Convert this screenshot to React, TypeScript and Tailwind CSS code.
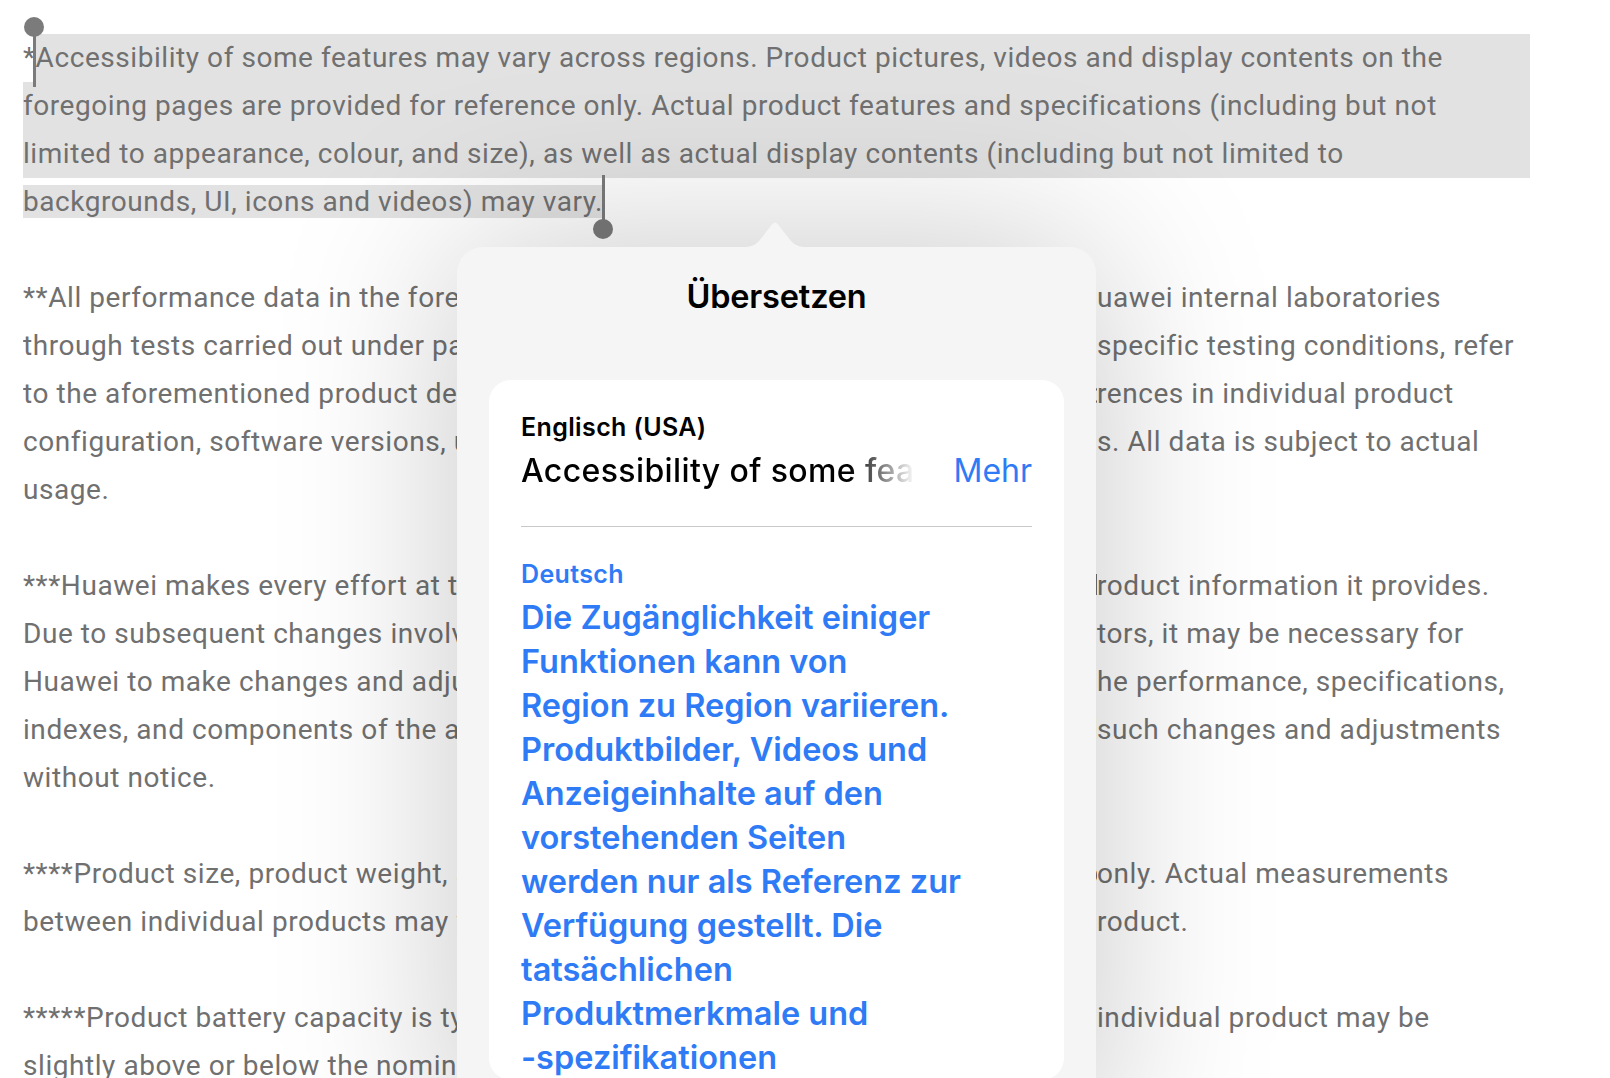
import React from 'react';

interface BgLineProps {
  head: string;
  tail?: string;
}

// one line of the disclaimer; the tail is what peeks out right of the popover
function BgLine({ head, tail }: BgLineProps) {
  if (!tail) {
    return <div className="whitespace-nowrap">{head}</div>;
  }
  return (
    <div className="grid grid-cols-[1074px_auto] whitespace-nowrap">
      <span className="overflow-hidden">{head}</span>
      <span>{tail}</span>
    </div>
  );
}

const paragraphs: BgLineProps[][] = [
  [
    {
      head: '**All performance data in the foregoing pages are theoretical values obtained from H',
      tail: 'uawei internal laboratories',
    },
    {
      head: 'through tests carried out under particular conditions. For more information on the ',
      tail: 'specific testing conditions, refer',
    },
    {
      head: 'to the aforementioned product details. The actual performance may vary owing to diffe',
      tail: 'rences in individual product',
    },
    {
      head: 'configuration, software versions, usage conditions and environmental factor',
      tail: 's. All data is subject to actual',
    },
    { head: 'usage.' },
  ],
  [
    {
      head: '***Huawei makes every effort at the time of publication to ensure the accuracy of the p',
      tail: 'roduct information it provides.',
    },
    {
      head: 'Due to subsequent changes involving product batches, production and supply fac',
      tail: 'tors, it may be necessary for',
    },
    {
      head: 'Huawei to make changes and adjustments to the text descriptions, images, and t',
      tail: 'he performance, specifications,',
    },
    {
      head: 'indexes, and components of the above-mentioned product. Huawei reserves the right to make ',
      tail: 'such changes and adjustments',
    },
    { head: 'without notice.' },
  ],
  [
    {
      head: '****Product size, product weight, and related specifications are theoretical values for reference ',
      tail: 'only. Actual measurements',
    },
    {
      head: 'between individual products may vary. Please refer to the actual p',
      tail: 'roduct.',
    },
  ],
  [
    {
      head: '*****Product battery capacity is typical value. The actual capacity of each ',
      tail: 'individual product may be',
    },
    { head: 'slightly above or below the nominal value.' },
  ],
];

const germanLines = [
  'Die Zugänglichkeit einiger',
  'Funktionen kann von',
  'Region zu Region variieren.',
  'Produktbilder, Videos und',
  'Anzeigeinhalte auf den',
  'vorstehenden Seiten',
  'werden nur als Referenz zur',
  'Verfügung gestellt. Die',
  'tatsächlichen',
  'Produktmerkmale und',
  '-spezifikationen',
];

function SelectionHandle({ top }: { top: boolean }) {
  return (
    <div className="flex flex-col items-center">
      {top && <div className="h-[20px] w-[20px] rounded-full bg-[#7b7b7b]" />}
      <div className={`w-[3px] bg-[#7b7b7b] ${top ? '-mt-[6px] h-[56px]' : 'h-[50px] -mb-[6px]'}`} />
      {!top && <div className="h-[20px] w-[20px] rounded-full bg-[#7b7b7b]" />}
    </div>
  );
}

function TranslatePopover() {
  return (
    <div className="absolute left-[457px] top-[219px] w-[639px]">
      <div className="flex justify-start pl-[286px]">
        <svg width="64" height="28" viewBox="0 0 64 28" className="block">
          <path
            d="M0 28 C8 28 12 26 16 22 L29 5.5 Q32 1.5 35 5.5 L48 22 C52 26 56 28 64 28 Z"
            fill="#f5f5f5"
          />
        </svg>
      </div>
      <div className="h-[900px] rounded-[26px] bg-[#f5f5f5] px-[32px] pt-[30px] font-['Inter','Roboto',sans-serif] shadow-[0_0_180px_rgba(0,0,0,0.22)]">
        <h2 className="text-center text-[32.5px] leading-[40px] font-semibold text-black tracking-[-0.005em]">
          Übersetzen
        </h2>
        <div className="mt-[63px] rounded-[22px] bg-white px-[32px] pt-[32px]">
          <div className="text-[25px] leading-[30px] font-semibold text-black tracking-[0.015em]">
            Englisch (USA)
          </div>
          <div className="mt-[9px] flex items-center gap-[40px]">
            <div className="min-w-0 flex-1 overflow-hidden whitespace-nowrap bg-[linear-gradient(to_right,#000_calc(100%-64px),rgba(0,0,0,0.03)_100%)] bg-clip-text text-[32px] leading-[40px] font-medium tracking-[0.012em] text-transparent">
              Accessibility of some features may vary across regions.
            </div>
            <button className="text-[32px] leading-[40px] text-[#2f7bf5]">Mehr</button>
          </div>
          <div className="mt-[35px] h-px bg-[#c9c9c9]" />
          <div className="mt-[32px] text-[25px] leading-[30px] font-semibold text-[#2f7bf5] tracking-[0.015em]">
            Deutsch
          </div>
          <div className="mt-[7px] text-[32.5px] leading-[44px] font-semibold text-[#2f7bf5]">
            {germanLines.map((line) => (
              <div key={line} className="whitespace-nowrap">
                {line}
              </div>
            ))}
          </div>
        </div>
      </div>
    </div>
  );
}

export default function App() {
  return (
    <div className="relative h-[1078px] overflow-hidden bg-white">
      <div className="pl-[23px] pt-[34px] font-['Roboto',sans-serif] text-[28px] leading-[48px] tracking-[0.02em] text-[#707070]">
        {/* selected paragraph */}
        <div className="w-[1507px]">
          <div className="bg-[linear-gradient(to_right,transparent_12px,#e2e2e2_12px)] whitespace-nowrap">
            *Accessibility of some features may vary across regions. Product pictures, videos and display contents on the
          </div>
          <div className="whitespace-nowrap bg-[#e2e2e2]">
            foregoing pages are provided for reference only. Actual product features and specifications (including but not
          </div>
          <div className="whitespace-nowrap bg-[#e2e2e2]">
            limited to appearance, colour, and size), as well as actual display contents (including but not limited to
          </div>
          <div className="whitespace-nowrap">
            <span className="bg-[#e2e2e2] pr-[2px]">backgrounds, UI, icons and videos) may vary.</span>
          </div>
        </div>

        {paragraphs.map((lines, i) => (
          <div key={i} className="mt-[48px]">
            {lines.map((line) => (
              <BgLine key={line.head} {...line} />
            ))}
          </div>
        ))}
      </div>

      <div className="absolute left-[24px] top-[17px]">
        <SelectionHandle top />
      </div>
      <div className="absolute left-[593px] top-[175px]">
        <SelectionHandle top={false} />
      </div>

      <TranslatePopover />
    </div>
  );
}
